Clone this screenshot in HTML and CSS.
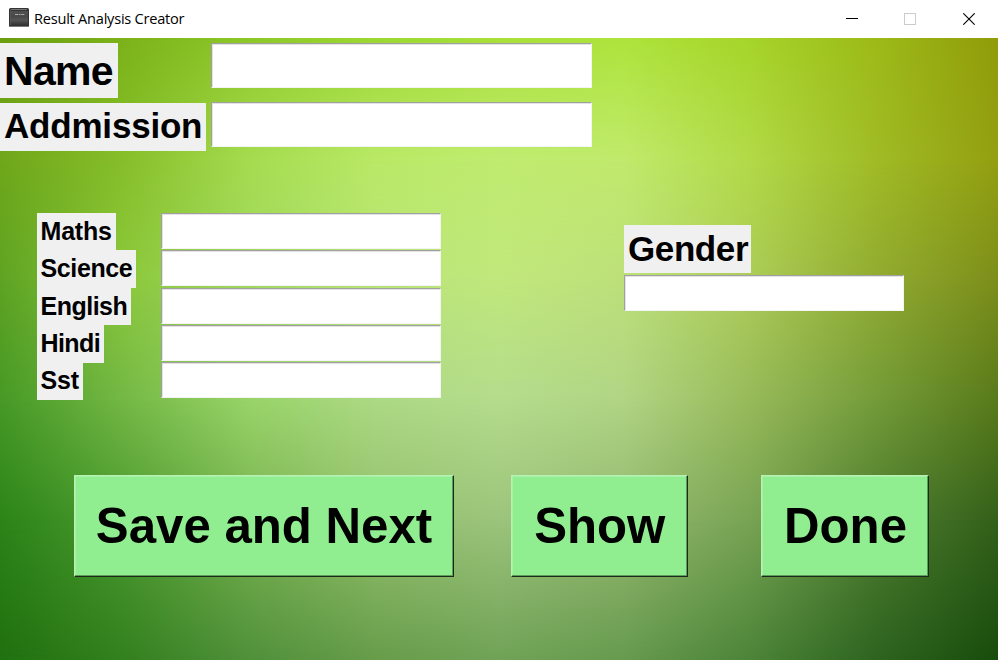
FILE: index.html
```html
<!DOCTYPE html>
<html lang="en">
<head>
<meta charset="utf-8">
<title>Result Analysis Creator</title>
<link rel="stylesheet" href="styles.css">
</head>
<body>
<header class="titlebar">
  <svg class="app-icon" width="20" height="20" viewBox="0 0 20 20">
    <defs><linearGradient id="book" x1="0" y1="0" x2="0" y2="1"><stop offset="0" stop-color="#505050"/><stop offset=".4" stop-color="#484848"/><stop offset=".65" stop-color="#555"/><stop offset="1" stop-color="#333"/></linearGradient></defs>
    <rect x="0" y="0" width="20" height="19" rx="1.5" fill="#333"/>
    <rect x="2" y="3" width="17" height="14" fill="url(#book)"/>
    <path d="M2 1.5H18" stroke="#777"/>
    <path d="M1.5 2V17" stroke="#555"/>
    <path d="M6 6.5H16" stroke="#aaa" stroke-dasharray="3 .6 2 .6"/>
    <path d="M1 18.5H19" stroke="#777"/>
  </svg>
  <h1 class="title">Result Analysis Creator</h1>
  <div class="controls">
    <svg width="12" height="12" viewBox="0 0 12 12"><path d="M0 5.5H12" stroke="#000"/></svg>
    <svg width="12" height="12" viewBox="0 0 12 12"><rect x=".5" y=".5" width="11" height="11" fill="none" stroke="#ccc"/></svg>
    <svg width="12" height="12" viewBox="0 0 12 12"><path d="M.3 .3L11.7 11.7M11.7 .3L.3 11.7" stroke="#000" stroke-width="1.1"/></svg>
  </div>
</header>
<main class="window">
  <div class="backdrop">
    <div class="band band-1"></div>
    <div class="band band-2"></div>
    <div class="band band-3"></div>
    <div class="band band-4"></div>
    <div class="band band-5"></div>
    <div class="band band-6"></div>
  </div>
  <section class="identity">
    <label class="label label-name" for="name">Name</label><input class="field" id="name">
    <label class="label label-admission" for="admission">Addmission</label><input class="field" id="admission">
  </section>
  <div class="details">
    <section class="marks">
      <label class="label" for="maths">Maths</label><input class="field" id="maths">
      <label class="label label-science" for="science">Science</label><input class="field" id="science">
      <label class="label label-english" for="english">English</label><input class="field" id="english">
      <label class="label label-hindi" for="hindi">Hindi</label><input class="field" id="hindi">
      <label class="label" for="sst">Sst</label><input class="field" id="sst">
    </section>
    <section class="gender">
      <label class="label label-gender" for="gender">Gender</label>
      <input class="field" id="gender">
    </section>
  </div>
  <div class="actions">
    <button class="button save">Save and Next</button>
    <button class="button show">Show</button>
    <button class="button done">Done</button>
  </div>
</main>
</body>
</html>
```
FILE: styles.css
```css
* { box-sizing: border-box; }
body {
  margin: 0;
  width: 998px;
  height: 660px;
  overflow: hidden;
  display: flex;
  flex-direction: column;
  font-family: "Liberation Sans", Arial, sans-serif;
  color: #000;
}
.titlebar {
  height: 38px;
  flex: none;
  display: flex;
  align-items: center;
  padding: 0 23px 0 9px;
  background: #fff;
}
.app-icon { margin-top: -2px; }
.title {
  margin: -2px 0 0 5px;
  font: 400 14.6px/20px "Open Sans", sans-serif;
  letter-spacing: -0.24px;
  white-space: nowrap;
}
.controls { display: flex; gap: 47px; margin-left: auto; }
.controls svg { display: block; }
.controls svg:first-child { margin-right: -1px; }

.window {
  position: relative;
  flex: 1;
  padding-top: 5px;
  isolation: isolate;
}
.backdrop, .band { position: absolute; inset: 0; }
.backdrop { z-index: -1; }
.band-1 { background: linear-gradient(90deg, #6b9f0f, #7cb31a, #8dc828, #9cd832, #a8e03a, #aee43c, #a6d52a, #9dbb18, #919c0a); }
.band-2 {
  background: linear-gradient(90deg, #6fa71a, #86bf2a, #a5dc50, #b9e966, #c0ec70, #c0ea6c, #b2da48, #a0bc26, #939f10);
  mask-image: linear-gradient(transparent 0, #000 122px);
}
.band-3 {
  background: linear-gradient(90deg, #5ea323, #8cc83c, #a0d860, #b8e478, #c0e87c, #bde07a, #accc58, #92ac32, #7c8e1a);
  mask-image: linear-gradient(transparent 122px, #000 242px);
}
.band-4 {
  background: linear-gradient(90deg, #469926, #74b845, #98d468, #acd984, #b4dc8c, #b0d484, #98ba5a, #749c3a, #587a1a);
  mask-image: linear-gradient(transparent 242px, #000 362px);
}
.band-5 {
  background: linear-gradient(90deg, #2c8418, #4c9a30, #78b250, #94c06c, #9cc47c, #94b870, #78a454, #4f7e30, #33601a);
  mask-image: linear-gradient(transparent 362px, #000 482px);
}
.band-6 {
  background: linear-gradient(90deg, #20700f, #33801f, #50903a, #669c4a, #70a256, #669a4e, #4c8438, #2e6420, #184c0c);
  mask-image: linear-gradient(transparent 482px, #000 622px);
}

.label {
  display: block;
  justify-self: start;
  background: #f0f0f0;
  font-weight: 700;
  padding-left: 4px;
  white-space: nowrap;
}
.field {
  display: block;
  width: 100%;
  margin: 0;
  padding: 0 4px;
  border: 1px solid;
  border-color: #a0a0a0 #f4f4f4 #f4f4f4 #a0a0a0;
  border-radius: 0;
  background: #fff;
  box-shadow: inset 1px 1px #e3e3e3;
  font: 700 20px "Liberation Sans", Arial, sans-serif;
  outline: 0;
}
.identity {
  display: grid;
  grid-template-columns: 211px 381px;
  grid-template-rows: 59px 49px;
}
.identity .field { height: 45px; }
.label-name { width: 118px; height: 55px; font-size: 41px; line-height: 56px; letter-spacing: -.7px; }
.label-admission { width: 206.4px; height: 48px; margin-top: 1px; font-size: 35px; line-height: 46px; letter-spacing: -.2px; }
.details {
  display: flex;
  justify-content: space-between;
  padding: 61.9px 94px 0 36.5px;
}
.marks {
  display: grid;
  grid-template-columns: 124.8px 280.2px;
  grid-auto-rows: 37.4px;
}
.marks .label { height: 37.5px; padding-right: 4px; font-size: 25px; line-height: 37px; letter-spacing: -.2px; }
.marks .label-science { letter-spacing: -.38px; }
.marks .label-english { letter-spacing: -.5px; }
.marks .label-hindi { letter-spacing: -.6px; }
.marks .field { height: 36px; }
.gender { width: 280px; padding-top: 12.1px; }
.label-gender { width: 127px; height: 48px; margin-bottom: 2px; font-size: 35px; line-height: 48px; letter-spacing: -.4px; }
.gender .field { height: 36px; }
.actions { display: flex; padding: 75.1px 0 0 73.5px; }
.button {
  height: 102px;
  flex: none;
  padding: 0 0 1px 1px;
  border: 1px solid;
  border-color: #b9f0b5 #1a2b19 #1a2b19 #b9f0b5;
  border-radius: 0;
  background: #90ee90;
  box-shadow: inset -1px -1px #5b9c5b, inset 1px 1px #a5f2a5;
  color: #000;
  font: 700 49.2px "Liberation Sans", Arial, sans-serif;
}
.save { width: 380px; }
.show { width: 176.5px; margin-left: 57.5px; }
.done { width: 168px; margin-left: 73.5px; }
```
